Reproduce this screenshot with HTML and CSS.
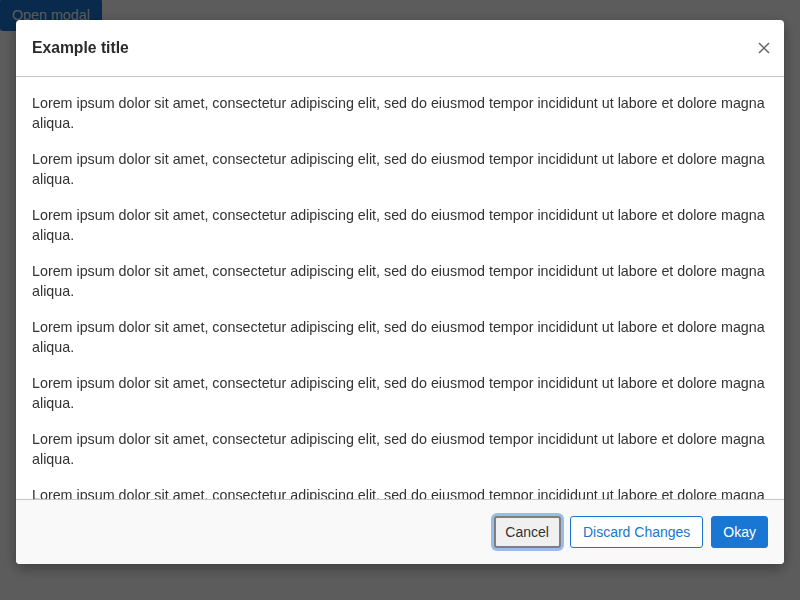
FILE: index.html
```html
<!DOCTYPE html>
<html lang="en">
<head>
<meta charset="utf-8">
<title>Modal</title>
<link rel="stylesheet" href="styles.css">
</head>
<body>
<button class="open-btn" type="button">Open modal</button>
<div class="backdrop"></div>
<div class="modal" role="dialog" aria-labelledby="modal-title">
  <header class="modal-header">
    <h2 class="modal-title" id="modal-title">Example title</h2>
    <button class="close-btn" type="button" aria-label="Close">
      <svg width="12" height="12" viewBox="0 0 12 12" aria-hidden="true"><path d="M1 1 L11 11 M11 1 L1 11" stroke="#666" stroke-width="1.5" fill="none"/></svg>
    </button>
  </header>
  <div class="modal-body">
    <p>Lorem ipsum dolor sit amet, consectetur adipiscing elit, sed do eiusmod tempor incididunt ut labore et dolore magna aliqua.</p>
    <p>Lorem ipsum dolor sit amet, consectetur adipiscing elit, sed do eiusmod tempor incididunt ut labore et dolore magna aliqua.</p>
    <p>Lorem ipsum dolor sit amet, consectetur adipiscing elit, sed do eiusmod tempor incididunt ut labore et dolore magna aliqua.</p>
    <p>Lorem ipsum dolor sit amet, consectetur adipiscing elit, sed do eiusmod tempor incididunt ut labore et dolore magna aliqua.</p>
    <p>Lorem ipsum dolor sit amet, consectetur adipiscing elit, sed do eiusmod tempor incididunt ut labore et dolore magna aliqua.</p>
    <p>Lorem ipsum dolor sit amet, consectetur adipiscing elit, sed do eiusmod tempor incididunt ut labore et dolore magna aliqua.</p>
    <p>Lorem ipsum dolor sit amet, consectetur adipiscing elit, sed do eiusmod tempor incididunt ut labore et dolore magna aliqua.</p>
    <p>Lorem ipsum dolor sit amet, consectetur adipiscing elit, sed do eiusmod tempor incididunt ut labore et dolore magna aliqua.</p>
    <p>Lorem ipsum dolor sit amet, consectetur adipiscing elit, sed do eiusmod tempor incididunt ut labore et dolore magna aliqua.</p>
    <p>Lorem ipsum dolor sit amet, consectetur adipiscing elit, sed do eiusmod tempor incididunt ut labore et dolore magna aliqua.</p>
  </div>
  <footer class="modal-footer">
    <button class="btn btn-cancel" type="button">Cancel</button>
    <button class="btn btn-outline" type="button">Discard Changes</button>
    <button class="btn btn-primary" type="button">Okay</button>
  </footer>
</div>
</body>
</html>
```

FILE: styles.css
```css
* { box-sizing: border-box; }

html, body {
  margin: 0;
  padding: 0;
  width: 800px;
  height: 600px;
  overflow: hidden;
  background: #fff;
  font-family: "Liberation Sans", Arial, sans-serif;
  font-size: 14.3px;
  color: #333;
}

.open-btn {
  display: block;
  height: 32px;
  padding: 0 12px;
  margin-top: -1px;
  border: 0;
  border-radius: 3px;
  background: #1976d2;
  color: #fff;
  font: 14.3px "Liberation Sans", Arial, sans-serif;
}

.backdrop {
  position: fixed;
  inset: 0;
  background: rgba(0, 0, 0, 0.64);
}

.modal {
  position: fixed;
  top: 20px;
  left: 16px;
  width: 768px;
  height: 544px;
  display: flex;
  flex-direction: column;
  background: #fff;
  border-radius: 4px;
  box-shadow: 0 4px 14px rgba(0, 0, 0, 0.35);
  overflow: hidden;
}

.modal-header {
  flex: none;
  height: 57px;
  display: flex;
  align-items: center;
  justify-content: space-between;
  padding: 0 8px 0 16px;
  border-bottom: 1px solid #c4c4c4;
}

.modal-title {
  margin: 0;
  font-size: 15.7px;
  font-weight: bold;
  color: #2b2b2b;
  line-height: 20px;
}

.close-btn {
  width: 24px;
  height: 24px;
  padding: 0;
  border: 0;
  background: transparent;
  display: flex;
  align-items: center;
  justify-content: center;
}

.modal-body {
  flex: 1;
  min-height: 0;
  overflow: hidden;
  padding: 16px 16px 0 16px;
}

.modal-body p {
  margin: 0 0 16px;
  line-height: 20px;
}

.modal-footer {
  flex: none;
  height: 65px;
  display: flex;
  align-items: center;
  justify-content: flex-end;
  gap: 8px;
  padding: 0 16px;
  background: #f9f9f9;
  border-top: 1px solid #c4c4c4;
}

.btn {
  height: 32px;
  padding: 0 12px;
  border-radius: 3px;
  font: 14px "Liberation Sans", Arial, sans-serif;
  line-height: 30px;
}

.btn-cancel {
  border: 2px solid #7f7f7f;
  background: #f0f0f0;
  color: #333;
  padding: 0 10px 0 9px;
  line-height: 28px;
  box-shadow: 0 0 0 3px #97bde8;
  margin-right: 1px;
}

.btn-outline {
  border: 1px solid #1976d2;
  background: #fff;
  color: #1976d2;
}

.btn-primary {
  border: 1px solid #1976d2;
  background: #1976d2;
  color: #fff;
  padding: 0 11px;
}
```
